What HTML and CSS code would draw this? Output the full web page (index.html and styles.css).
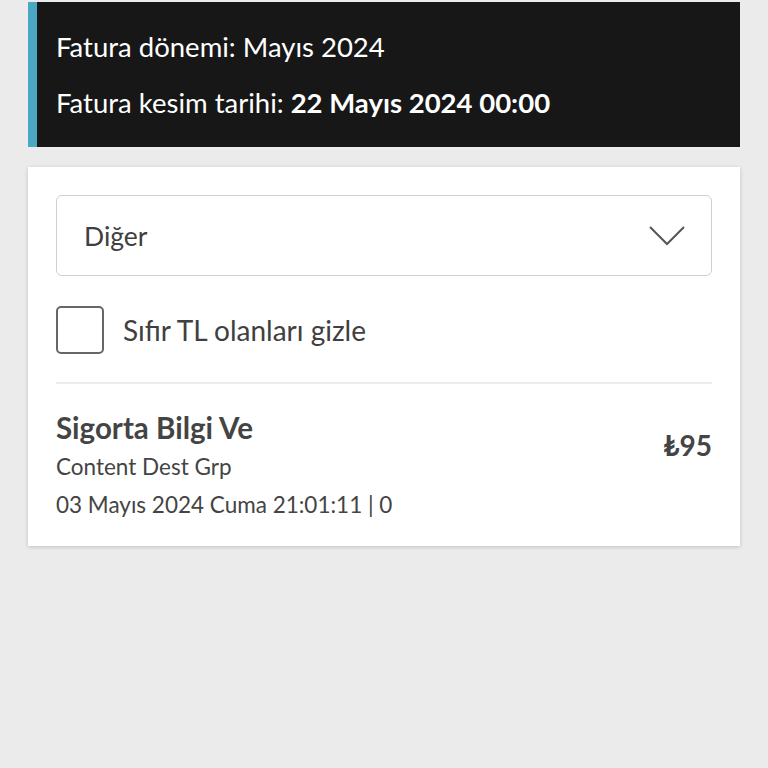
FILE: index.html
```html
<!DOCTYPE html>
<html lang="tr">
<head>
<meta charset="utf-8">
<link rel="stylesheet" href="styles.css">
</head>
<body>
<div class="page">
  <div class="banner">
    <div class="banner-line">Fatura dönemi: Mayıs 2024</div>
    <div class="banner-line">Fatura kesim tarihi: <b>22 Mayıs 2024 00:00</b></div>
  </div>
  <div class="card">
    <div class="select">
      <span class="select-text">Diğer</span>
      <svg class="chev" width="36" height="20" viewBox="0 0 36 20"><path d="M1 1 L18 18 L35 1" fill="none" stroke="#555" stroke-width="2"/></svg>
    </div>
    <label class="check">
      <span class="box"></span>
      <span class="check-text">Sıfır TL olanları gizle</span>
    </label>
    <div class="divider"></div>
    <div class="item">
      <div class="item-info">
        <div class="item-title">Sigorta Bilgi Ve</div>
        <div class="item-sub">Content Dest Grp</div>
        <div class="item-sub">03 Mayıs 2024 Cuma 21:01:11 | 0</div>
      </div>
      <div class="price">₺95</div>
    </div>
  </div>
</div>
</body>
</html>
```
FILE: styles.css
```css
html, body { margin: 0; padding: 0; }
body {
  background: #ebebeb;
  font-family: Lato, "Open Sans", sans-serif;
  width: 768px;
  height: 768px;
  overflow: hidden;
}
.page {
  padding: 2px 28px 0 28px;
  display: flex;
  flex-direction: column;
  gap: 20px;
}
.banner {
  background: #171717;
  border-left: 9px solid #4aa8c4;
  padding: 26px 20px 25px 19px;
  color: #fff;
  display: flex;
  flex-direction: column;
  gap: 18px;
}
.banner-line {
  font-size: 27.5px;
  line-height: 38px;
}
.banner-line b { font-weight: 700; }
.card {
  background: #fff;
  box-shadow: 0 1px 4px rgba(0,0,0,0.18);
  padding: 28px 28px 22px 28px;
  display: flex;
  flex-direction: column;
}
.select {
  height: 79px;
  border: 1.5px solid #cfcfcf;
  border-radius: 6px;
  display: flex;
  align-items: center;
  justify-content: space-between;
  padding: 0 26px 0 27px;
}
.select-text { font-size: 26.5px; color: #404040; }
.chev { display: block; }
.check {
  display: flex;
  align-items: center;
  gap: 19px;
  margin-top: 30px;
}
.box {
  width: 44px;
  height: 44px;
  border: 2px solid #666;
  border-radius: 5px;
}
.check-text { font-size: 28px; color: #404040; }
.divider {
  height: 2px;
  background: #ececec;
  margin-top: 28px;
}
.item {
  display: flex;
  justify-content: space-between;
  align-items: flex-start;
  padding-top: 24px;
}
.item-title {
  font-size: 29.5px;
  font-weight: 700;
  color: #444;
  line-height: 40px;
}
.item-sub {
  font-size: 22.5px;
  color: #444;
  line-height: 38px;
}
.price {
  font-size: 28px;
  font-weight: 700;
  color: #444;
  margin-top: 19px;
  line-height: 36px;
}
```
